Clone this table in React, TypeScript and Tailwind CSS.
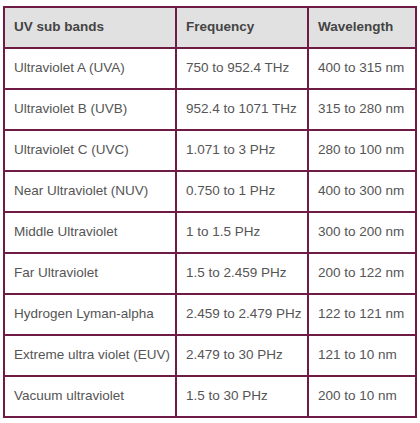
const rows: [string, string, string][] = [
	["Ultraviolet A (UVA)", "750 to 952.4 THz", "400 to 315 nm"],
	["Ultraviolet B (UVB)", "952.4 to 1071 THz", "315 to 280 nm"],
	["Ultraviolet C (UVC)", "1.071 to 3 PHz", "280 to 100 nm"],
	["Near Ultraviolet (NUV)", "0.750 to 1 PHz", "400 to 300 nm"],
	["Middle Ultraviolet", "1 to 1.5 PHz", "300 to 200 nm"],
	["Far Ultraviolet", "1.5 to 2.459 PHz", "200 to 122 nm"],
	["Hydrogen Lyman-alpha", "2.459 to 2.479 PHz", "122 to 121 nm"],
	["Extreme ultra violet (EUV)", "2.479 to 30 PHz", "121 to 10 nm"],
	["Vacuum ultraviolet", "1.5 to 30 PHz", "200 to 10 nm"],
];

const cell = "border-2 border-[#6e1c45] px-[9px] h-[41px] text-left align-middle whitespace-nowrap";

export default function App() {
	return (
		<div className="w-[420px] h-[423px] bg-white pt-[6px] pl-[3px] font-['Liberation_Sans',Arial,sans-serif] text-[13.5px]">
			<table className="border-collapse table-fixed w-[412px]">
				<colgroup>
					<col className="w-[172px]" />
					<col className="w-[132px]" />
					<col className="w-[108px]" />
				</colgroup>
				<thead>
					<tr className="bg-[#e1e1e1] text-[#444444]">
						<th className={`${cell} font-bold`}>UV sub bands</th>
						<th className={`${cell} font-bold`}>Frequency</th>
						<th className={`${cell} font-bold`}>Wavelength</th>
					</tr>
				</thead>
				<tbody className="text-[#555555]">
					{rows.map((r) => (
						<tr key={r[0]}>
							<td className={cell}>{r[0]}</td>
							<td className={cell}>{r[1]}</td>
							<td className={cell}>{r[2]}</td>
						</tr>
					))}
				</tbody>
			</table>
		</div>
	);
}
